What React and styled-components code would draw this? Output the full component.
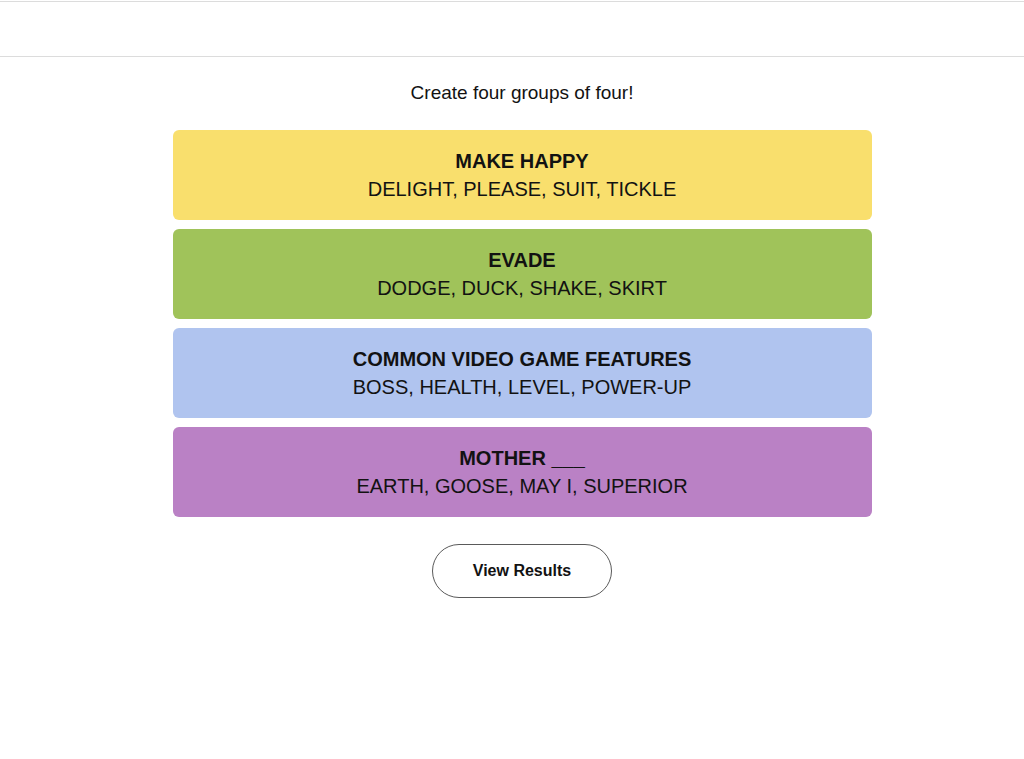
import React from 'react';
import styled, { createGlobalStyle } from 'styled-components';

const GlobalStyle = createGlobalStyle`
  body {
    margin: 0;
    background: #ffffff;
    font-family: "Liberation Sans", Arial, sans-serif;
    color: #121212;
  }
`;

const Header = styled.header`
  margin-top: 1px;
  height: 54px;
  border-top: 1px solid #dcdcdc;
  border-bottom: 1px solid #dcdcdc;
`;

const Main = styled.main`
  display: flex;
  flex-direction: column;
  align-items: center;
  padding-left: 20px;
`;

const Prompt = styled.p`
  margin: 24px 0 0;
  font-size: 19px;
  line-height: 24px;
  color: #121212;
`;

const Board = styled.div`
  display: flex;
  flex-direction: column;
  gap: 9px;
  width: 699px;
  margin-top: 25px;
`;

const Group = styled.div`
  height: 90px;
  border-radius: 6px;
  background: ${(p) => p.$color};
  display: flex;
  flex-direction: column;
  align-items: center;
  justify-content: center;
  text-align: center;
`;

const Title = styled.h3`
  margin: 0;
  font-size: 20px;
  line-height: 28px;
  font-weight: 700;
  text-transform: uppercase;
`;

const Words = styled.p`
  margin: 0;
  font-size: 20px;
  line-height: 28px;
  text-transform: uppercase;
`;

const ResultsButton = styled.button`
  margin-top: 27px;
  width: 180px;
  height: 54px;
  border: 1px solid #5a5a5a;
  border-radius: 9999px;
  background: #ffffff;
  color: #121212;
  font-family: inherit;
  font-size: 16px;
  font-weight: 700;
  cursor: pointer;
`;

const groups = [
  { title: 'Make Happy', words: 'DELIGHT, PLEASE, SUIT, TICKLE', color: '#f9df6d' },
  { title: 'Evade', words: 'DODGE, DUCK, SHAKE, SKIRT', color: '#a0c35a' },
  { title: 'Common Video Game Features', words: 'BOSS, HEALTH, LEVEL, POWER-UP', color: '#b0c4ef' },
  { title: 'Mother ___', words: 'EARTH, GOOSE, MAY I, SUPERIOR', color: '#ba81c5' },
];

const App = () => (
  <>
    <GlobalStyle />
    <Header />
    <Main>
      <Prompt>Create four groups of four!</Prompt>
      <Board>
        {groups.map((g) => (
          <Group key={g.title} $color={g.color}>
            <Title>{g.title}</Title>
            <Words>{g.words}</Words>
          </Group>
        ))}
      </Board>
      <ResultsButton>View Results</ResultsButton>
    </Main>
  </>
);

export default App;
